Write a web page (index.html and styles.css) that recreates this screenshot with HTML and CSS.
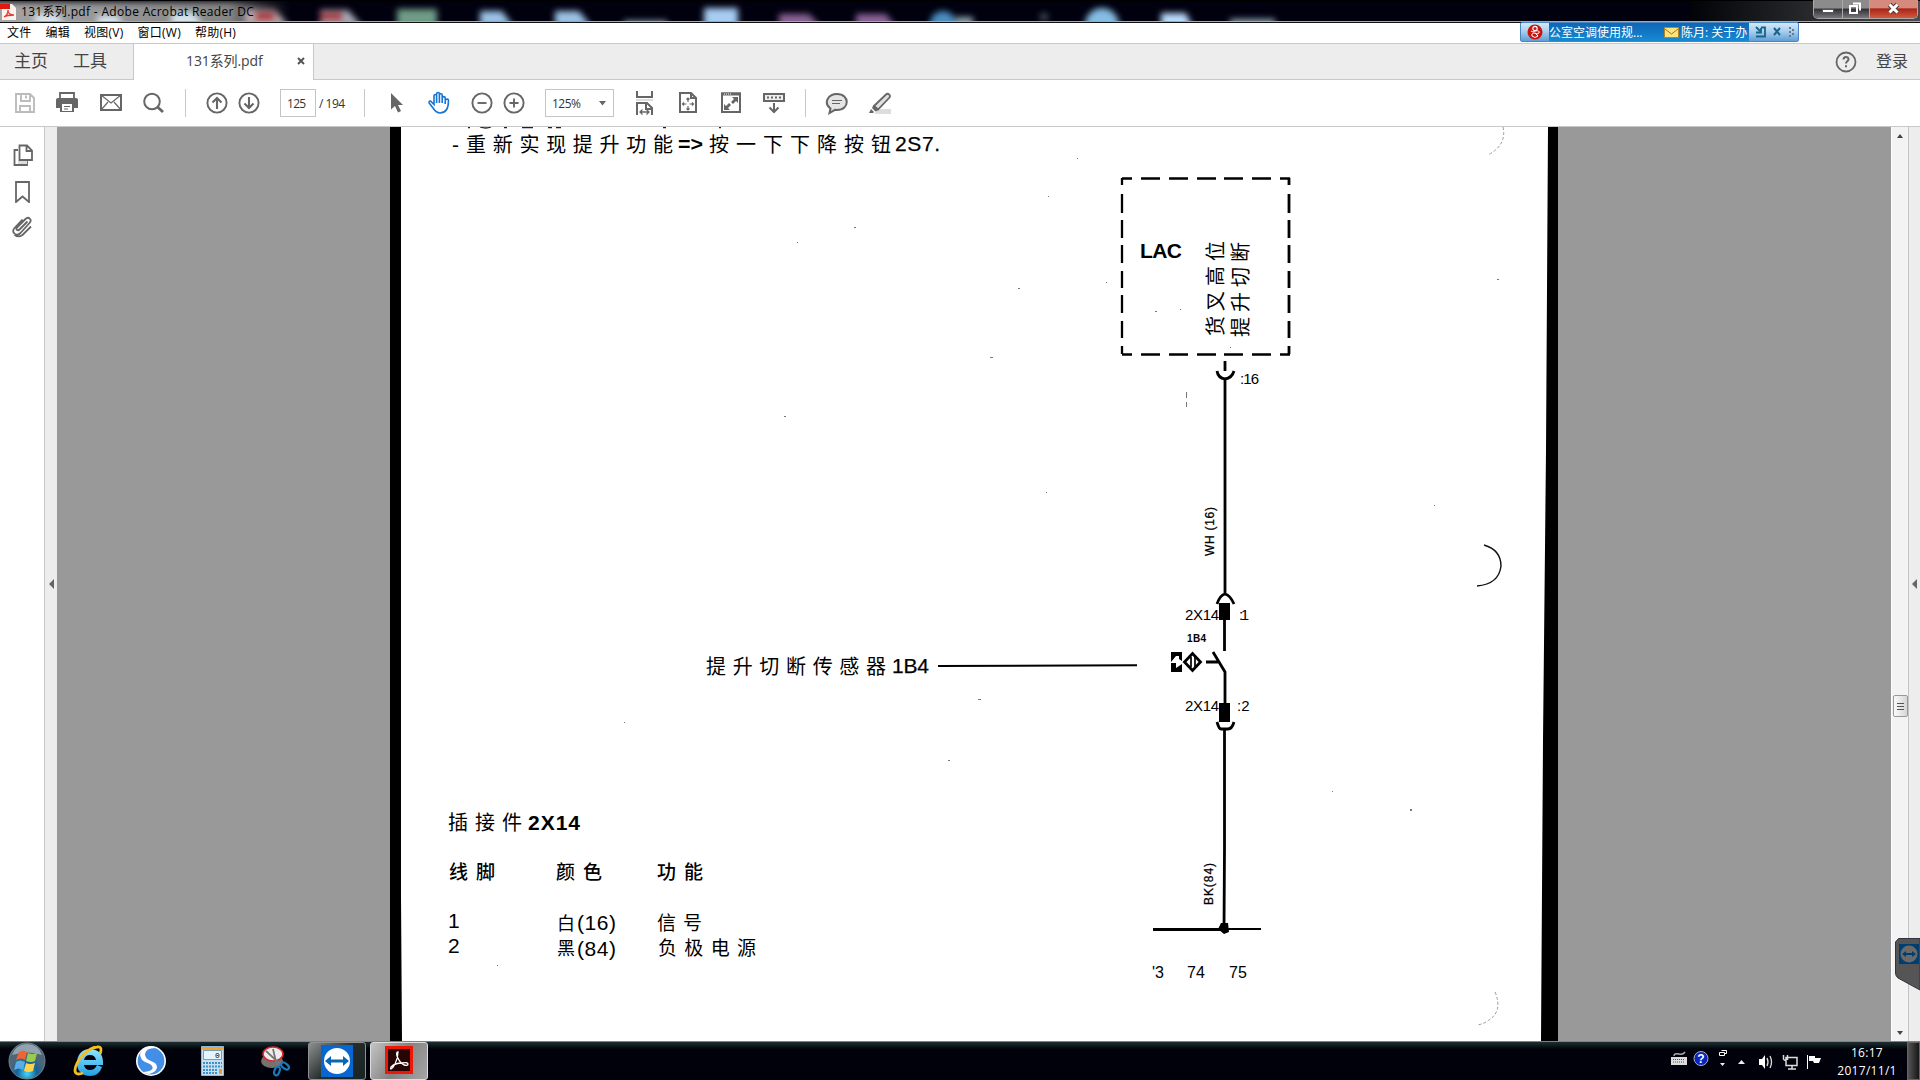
FILE: index.html
```html
<!DOCTYPE html>
<html lang="zh-CN">
<head>
<meta charset="utf-8">
<title>131系列.pdf - Adobe Acrobat Reader DC</title>
<link rel="stylesheet" href="styles.css">
</head>
<body>
<div class="screen">
<header class="titlebar">
  <svg class="aero" viewBox="0 0 1920 23" width="1920" height="23">
    <defs>
      <filter id="soft" x="-50%" y="-80%" width="200%" height="260%"><feGaussianBlur stdDeviation="3"/></filter>
      <linearGradient id="glow"><stop offset="0" stop-color="#a5a5a5"/><stop offset=".8" stop-color="#858585"/><stop offset="1" stop-color="#5a5a5e" stop-opacity="0"/></linearGradient>
      <linearGradient id="sheen"><stop offset="0" stop-color="#010308"/><stop offset="1" stop-color="#4c4c4c"/></linearGradient>
    </defs>
    <rect width="1920" height="23" fill="#00000f"/>
    <rect x="1690" width="230" height="23" fill="url(#sheen)"/>
    <g filter="url(#soft)">
      <rect x="-10" y="2" width="300" height="28" fill="url(#glow)"/>
      <path d="M35 14h22l8 14H35zM98 16h20l5 12H98zM172 13h22l8 13h-30z" fill="#d7e5ec"/>
      <path d="M245 10h30l14 16h-44z" fill="#b9aab1"/><rect x="255" y="12" width="20" height="9" fill="#ad282f"/>
      <path d="M320 10h28l14 16h-42z" fill="#a7aab8"/><rect x="320" y="12" width="23" height="9" fill="#a92936"/>
      <rect x="397" y="9" width="40" height="18" fill="#6f9b86"/>
      <path d="M480 11h22l11 15h-33zM555 11h24l12 15h-36z" fill="#9bc2e6"/>
      <rect x="624" y="21" width="43" height="5" fill="#a6b9cf"/>
      <rect x="704" y="8" width="34" height="22" fill="#a6ccf2"/>
      <path d="M779 14h30l12 13h-42zM856 14h30l10 13h-40z" fill="#8b6396"/>
      <circle cx="943" cy="24" r="13" fill="#4a8fc0"/><rect x="956" y="17" width="17" height="10" fill="#8ea5b0"/>
      <circle cx="1044" cy="17" r="4" fill="#46535b"/>
      <circle cx="1102" cy="25" r="17" fill="#85bde3"/>
      <path d="M1161 13h25l7 15h-32z" fill="#badbfb"/><rect x="1230" y="19" width="45" height="9" fill="#8ea0af"/>
    </g>
    <path d="M0 21.5h1920" stroke="#a8a8a8"/><path d="M0 22.5h1920" stroke="#111"/><path d="M0 .5h1920" stroke="#000"/>
  </svg>
  <svg class="pdf-mark" viewBox="0 0 16 18" width="16" height="18"><path d="M2 1h10l4 4v12H2z" fill="#f6f3f1"/><path d="M0 1h10v5H0z" fill="#e11a10"/><path d="M4 14c2-1 4-4 4-7 0 4 3 5 6 5-4 0-7 0-10 2z" fill="none" stroke="#e23b30" stroke-width="1.3"/></svg>
  <span class="window-title">131系列.pdf - Adobe Acrobat Reader DC</span>
  <div class="window-buttons">
    <span class="wb wb-min"><svg width="28" height="18" viewBox="0 0 28 18"><path d="M8.500 9.500h11v3h-11z" fill="#fff" stroke="#555"/></svg></span>
    <span class="wb wb-max"><svg width="26" height="18" viewBox="0 0 26 18"><path d="M10 3.500h7v7M7 6h7v7H7z" fill="none" stroke="#fff" stroke-width="2"/></svg></span>
    <span class="wb wb-close"><svg width="47" height="18" viewBox="0 0 47 18"><path d="M19.500 4.500l8 8m0-8l-8 8" stroke="#5b3530" stroke-width="5"/><path d="M19.500 4.500l8 8m0-8l-8 8" stroke="#fff" stroke-width="3"/></svg></span>
  </div>
</header>

<nav class="menubar"><span>文件</span><span>编辑</span><span>视图(V)</span><span>窗口(W)</span><span>帮助(H)</span></nav>

<div class="tabbar">
  <span class="tab-home">主页</span><span class="tab-tools">工具</span>
  <div class="tab-doc"><span class="tab-name">131系列.pdf</span><svg width="8" height="8" viewBox="0 0 8 8"><path d="M1 1l6 6m0-6L1 7" stroke="#555" stroke-width="2"/></svg></div>
  <svg class="help" width="22" height="22" viewBox="0 0 22 22"><circle cx="11" cy="11" r="9.500" fill="none" stroke="#666" stroke-width="1.800"/><path d="M8.500 8.500c0-3.500 5-3.300 5-.3 0 2-2.500 2-2.500 4.300M11 14.200v2" fill="none" stroke="#666" stroke-width="2"/></svg>
  <span class="login">登录</span>
</div>

<div class="toolbar">
  <svg class="ic" viewBox="0 0 24 24"><path d="M3 3h14l4 4v14H3zM8 3v7h9V3M13 4.500v3M7 21v-6h10v6" fill="none" stroke="#bcbcbc" stroke-width="1.900"/></svg>
  <svg class="ic" viewBox="0 0 24 24"><path d="M5 7V2h14v5" fill="none" stroke="#666" stroke-width="1.800"/><path d="M3 7h18q2 0 2 2v8h-4v4H5v-4H1V9q0-2 2-2z" fill="#666"/><path d="M7 13h10v7H7z" fill="#fff"/><path d="M9 15.500h6M9 18h4" stroke="#666"/></svg>
  <svg class="ic" viewBox="0 0 24 24"><path d="M2 4h20v15H2z" fill="none" stroke="#666" stroke-width="2"/><path d="M2 4l10 8 10-8M2 19l7-8m13 8l-7-8" fill="none" stroke="#666" stroke-width="1.200"/></svg>
  <svg class="ic" viewBox="0 0 24 24"><circle cx="11" cy="10.500" r="7.800" fill="none" stroke="#666" stroke-width="2"/><path d="M16.500 16l5.500 5" stroke="#666" stroke-width="2.800"/></svg>
  <i class="sep"></i>
  <svg class="ic" viewBox="0 0 24 24"><circle cx="12" cy="12" r="9.600" fill="none" stroke="#666" stroke-width="1.900"/><path d="M12 18V7m-4.500 4.500L12 7l4.500 4.500" fill="none" stroke="#666" stroke-width="2.100"/></svg>
  <svg class="ic" viewBox="0 0 24 24"><circle cx="12" cy="12" r="9.600" fill="none" stroke="#666" stroke-width="1.900"/><path d="M12 6v11m-4.500-4.500L12 17l4.500-4.500" fill="none" stroke="#666" stroke-width="2.100"/></svg>
  <span class="box page-box">125</span>
  <span class="page-total">/ 194</span>
  <i class="sep"></i>
  <svg class="ic" viewBox="0 0 24 24"><path d="M7 2v16.500l4-3.500 3 6.500 3-1.500-3-6h5z" fill="#666"/></svg>
  <svg class="ic" viewBox="0 0 24 24"><path d="M6 17L2.200 12c-.8-1.500 1-2.600 2.200-1.300L7 13.500V5c0-2 2.600-2 2.600 0V3c0-2 2.800-2 2.800 0v1c0-1.800 2.800-1.800 2.800.2V7c0-1.900 3-1.900 3 0v2.500c.8-2 3.300-1.700 3.300 0 0 5-.8 12.500-8.500 12.500C9.500 22 8 20 6 17zM9.600 4.500V12M12.400 4v8M15.200 5v7M18.200 8v5" fill="none" stroke="#1674d2" stroke-width="1.600"/></svg>
  <svg class="ic" viewBox="0 0 24 24"><circle cx="12" cy="12" r="9.600" fill="none" stroke="#666" stroke-width="1.900"/><path d="M7.500 12h9" stroke="#666" stroke-width="1.900"/></svg>
  <svg class="ic" viewBox="0 0 24 24"><circle cx="12" cy="12" r="9.600" fill="none" stroke="#666" stroke-width="1.900"/><path d="M7.500 12h9M12 7.500v9" stroke="#666" stroke-width="1.900"/></svg>
  <span class="box zoom-box">125%<svg width="7" height="5" viewBox="0 0 7 5"><path d="M0 0h7L3.500 4.500z" fill="#666"/></svg></span>
  <svg class="ic" viewBox="0 0 24 24"><path d="M5 0v6h15V0M5 24V12h10l5 5v7M14 12v6h6" fill="none" stroke="#666" stroke-width="2"/><path d="M4 9h17" stroke="#ddd" stroke-width="2"/><path d="M8 21h9M10.500 18.500L8 21l2.500 2.500M14.500 18.500L17 21l-2.500 2.500" fill="none" stroke="#666" stroke-width="1.300"/></svg>
  <svg class="ic" viewBox="0 0 24 24"><path d="M4 2h11l5 5v14H4zM15 2v5h5" fill="none" stroke="#666" stroke-width="2"/><path d="M12 7v4m0 4v4M6.500 13h4m3 0h4M10.500 8.500L12 7l1.500 1.500M10.500 17.500L12 19l1.500-1.500M8 11.500L6.500 13 8 14.500M16 11.500l1.500 1.500-1.500 1.500" fill="none" stroke="#666" stroke-width="1.200"/></svg>
  <svg class="ic" viewBox="0 0 24 24"><path d="M3 2.500h18V21H3z" fill="none" stroke="#666" stroke-width="2"/><path d="M2 3h20" stroke="#666" stroke-width="3"/><path d="M5 3h7" stroke="#fff" stroke-dasharray="1 1"/><path d="M13 6h6v6l-2-2-3 3-2-2 3-3zM5 13v6h6l-2-2 3-3-2-2-3 3z" fill="#666"/></svg>
  <svg class="ic" viewBox="0 0 24 24"><path d="M2 3h20v7H2z" fill="#eee" stroke="#666" stroke-width="2"/><path d="M5 6.500h14" stroke="#666" stroke-width="2" stroke-dasharray="2 2"/><path d="M12 12v9m-4.500-4.500L12 21l4.500-4.500" fill="none" stroke="#666" stroke-width="2"/></svg>
  <i class="sep"></i>
  <svg class="ic" viewBox="0 0 24 24"><path d="M12 3c13 0 13 16 0 16l-2-.2L4.500 22l1-4.500C-2 12 3 3 12 3z" fill="#e5e5e5" stroke="#666" stroke-width="2"/><path d="M7 9.500h10M7 12.500h8" stroke="#666" stroke-width="1.200"/></svg>
  <svg class="ic" viewBox="0 0 24 24"><path d="M10 18h13v5H6z" fill="#ddd"/><path d="M6 15L18 3.500c2-2 5 .5 3.500 3L10 18.500z" fill="#e1e1e1" stroke="#666" stroke-width="1.800"/><path d="M5.500 14l5 5-3 1.500-3.500-3.500zM3 18l3 3-1 1H1z" fill="#666"/></svg>
</div>

<main class="workspace">
  <aside class="sidebar">
    <svg width="22" height="23" viewBox="0 0 22 23"><path d="M6 6H2.500v15H15v-4" fill="none" stroke="#666" stroke-width="1.800"/><path d="M6 17h9v3H6z" fill="#ddd"/><path d="M7.500 1.500H15l5 5V16H7.500zM14.500 1.500V7H20" fill="#fff" stroke="#666" stroke-width="1.800"/></svg>
    <svg width="22" height="23" viewBox="0 0 22 23"><path d="M4 2h13v20l-6.500-5.500L4 22z" fill="none" stroke="#666" stroke-width="1.800"/></svg>
    <svg width="22" height="23" viewBox="0 0 22 23"><path d="M16 6l-8 8c-2 2-4-.5-2.500-2L14 3.500c3-3 7 .5 4 4L9 17.500c-4 4-10-.8-6-5L11 4M19.500 11L11 19.500c-3 2-6 1.500-8-.5" transform="translate(-.5 -.5)" fill="none" stroke="#666" stroke-width="1.800"/></svg>
  </aside>
  <div class="rail"><i class="arrow-left"></i></div>
  <div class="viewer">
    <svg class="scan" viewBox="390 127 1168 914" width="1168" height="914">
      <rect x="390" y="127" width="1168" height="914" fill="#fff"/>
      <path d="M390 127h11v769l1 145h-12zM1548 127h10v914h-17l2-300 3-290z" fill="#000"/>
      <g fill="none" stroke="#222" stroke-width="1.300"><path d="M468 127.500h2M480 127q6 2 11 0M504 127.500h3M522 127.500h11M548 127.500h4M556 127.500h5M663 127.500h3M719 127.500h2"/></g>
      <g class="hand" font-size="20">
        <text x="466" y="152" textLength="207">重新实现提升功能</text>
        <text x="709" y="152" textLength="182">按一下下降按钮</text>
        <text x="706" y="674" textLength="180">提升切断传感器</text>
        <text x="448" y="830" textLength="74">插接件</text>
        <g font-weight="500"><text x="449" y="879" font-size="19" textLength="46">线脚</text><text x="556" y="879" font-size="19" textLength="46">颜色</text><text x="657" y="879" font-size="19" textLength="46">功能</text></g>
        <text x="557" y="930" font-size="18">白</text><text x="657" y="930" font-size="19" textLength="45">信号</text>
        <text x="557" y="955" font-size="18">黑</text><text x="658" y="955" font-size="19" textLength="98">负极电源</text>
        <text transform="translate(1223 336) rotate(-90)" textLength="95">货叉高位</text>
        <text transform="translate(1248 337) rotate(-90)" textLength="95">提升切断</text>
      </g>
      <g class="type" font-size="21">
        <text x="452" y="152">-</text>
        <text x="678" y="151" textLength="25" lengthAdjust="spacingAndGlyphs" font-weight="bold">=&gt;</text><text x="895" y="151" class="firm" textLength="45">2S7.</text>
        <text x="892" y="673" class="firm" textLength="37">1B4</text>
        <text x="528" y="830" font-weight="bold" textLength="52">2X14</text>
        <text x="448" y="928">1</text><text x="448" y="953">2</text>
        <text x="577" y="930" textLength="39">(16)</text><text x="577" y="956" textLength="39">(84)</text>
        <text x="1140" y="258" font-weight="bold" textLength="42">LAC</text>
        <g font-size="15">
          <text x="1240" y="384" textLength="19">:16</text>
          <text x="1185" y="620" textLength="34">2X14</text><text x="1239" y="620" textLength="10">:1</text>
          <text x="1185" y="711" textLength="34">2X14</text><text x="1237" y="711">:2</text>
          <text x="1187" y="642" font-size="10" font-weight="bold" textLength="19">1B4</text>
          <text x="1152" y="978" font-size="16">'3</text><text x="1187" y="978" font-size="16" textLength="18">74</text><text x="1229" y="978" font-size="16" textLength="18">75</text>
          <text class="firm" transform="translate(1214 556) rotate(-90)" font-size="12" textLength="49">WH (16)</text>
          <text class="firm" transform="translate(1213 905) rotate(-90)" font-size="12" textLength="42">BK(84)</text>
        </g>
      </g>
      <g fill="none" stroke="#000" stroke-width="2.800">
        <path d="M1122 178.500h10m9 0h19m9 0h19m9 0h19m8 0h19m9 0h19m9 0h10M1122 354.500h10m9 0h19m9 0h19m9 0h19m8 0h19m9 0h19m9 0h10" stroke-width="2.300"/>
        <path d="M1122 178v7m0 9v19m0 7v18m0 7v18m0 8v17m0 7v18m0 8v17m0 8v8" stroke-width="2.300"/>
        <path d="M1289 178v7m0 9v19m0 7v18m0 7v18m0 8v17m0 7v18m0 8v17m0 8v8"/>
        <path d="M1225 361v10M1217 371q1 7 8 8 7-1 9-8M1225 379v216M1217 604q3-9 8-10 5 1 9 10M1224.500 620v31M1213 652l12 20v31M1206 662h12M1217 722q2 7 4 7h7q4 0 6-7M1224.500 729v120l-.5 80"/>
        <path d="M938 666l199-.7" stroke-width="2"/><path d="M1153 929.500h72" stroke-width="2.800"/><path d="M1225 929h36" stroke-width="2"/>
        <path d="M1192.500 653.500l8 8.500-8 8.500-8-8.500z"/><path d="M1191 657v10M1195 657v10" stroke-width="1.700"/>
      </g>
      <path d="M1219 603h11v17h-11zM1219 703h11v19h-11zM1221 923h7l1 9-5 2-6-5zM1171 652h11v9l-3-2v-3h-3l-5 6zM1171 672h11v-8l-6 4v-5h-5z"/>
      <g fill="none" stroke="#333" stroke-width="1"><path d="M1484 545q17 5 17 21-2 18-24 20" stroke="#111" stroke-width="1.400"/><path d="M1503 127q4 18-15 28M1495 992q8 19-6 28-5 4-12 5" stroke="#999" stroke-dasharray="3 2"/></g>
      <path d="M1186 392h1v6h-1zM1186 402h1v5h-1zM990 357h3v1h-3zM978 699h3v1h-3zM948 760h2v1h-2zM1410 809h2v2h-2zM1497 279h2v1h-2zM1155 311h2v1h-2zM1018 288h2v1h-2zM1106 282h1v1h-1zM1180 309h1v1h-1zM1230 347h1v1h-1zM854 227h2v1h-2zM1048 196h1v1h-1zM784 416h2v1h-2zM497 965h1v1h-1zM624 722h1v1h-1zM1332 791h1v1h-1zM1077 158h1v1h-1zM797 242h1v1h-1zM1434 505h1v1h-1zM1046 492h1v1h-1z" fill="#777"/>
    </svg>
  </div>
  <div class="scrollbar"><i class="arrow-up"></i><span class="thumb"><i></i><i></i><i></i></span><i class="arrow-down"></i></div>
  <div class="right-rail"><i class="arrow-left"></i></div>
</main>

<footer class="taskbar">
  <div class="task-icon start"><svg width="38" height="38" viewBox="0 0 38 38"><defs><radialGradient id="orb" cy=".85"><stop offset="0" stop-color="#46d7f7"/><stop offset=".55" stop-color="#12659d"/><stop offset="1" stop-color="#4e6678"/></radialGradient></defs><circle cx="19" cy="19" r="18" fill="url(#orb)" stroke="#71838d"/><path d="M4 13Q8 2 19 2t15 11q-14-5-30 0z" fill="#b6c4cc" opacity=".65"/><path d="M11 10q4-3 8 0l-2 8q-4-3-9 0z" fill="#ef6335"/><path d="M20 11q4 2 9 0l-2 8q-4 2-9 0z" fill="#9bcb4e"/><path d="M8 20q4-3 9 0l-2 8q-4-3-9 0z" fill="#58afe8"/><path d="M18 21q4 2 9 0l-2 8q-4 2-9 0z" fill="#ffd24b"/></svg></div>
  <div class="task-icon ie"><svg width="32" height="32" viewBox="0 0 32 32"><defs><linearGradient id="ieb" y2="1" x2="0"><stop stop-color="#91e5ff"/><stop offset="1" stop-color="#209fe6"/></linearGradient></defs><path d="M24 20q-2 5-7 5-5 0-6-5h19v-3C30 9 25 4 17 4S4 10 4 18s5 13 13 13q9 0 12-9zM11 15q1-5 6-5t6 5z" fill="url(#ieb)"/><path d="M27 9q3-8-3-7C15 3 3 15 2 25q0 6 8 3" fill="none" stroke="#f5be22" stroke-width="2.800"/></svg></div>
  <div class="task-icon sogou"><svg width="30" height="30" viewBox="0 0 30 30"><circle cx="15" cy="15" r="15" fill="#fff"/><circle cx="15" cy="15" r="13.400" fill="#438fe8"/><path d="M22 2Q10 1 9 8q0 5 6 7 6 2 6 6 0 5-8 7-3 0-6-2 12-1 9-6-1-2-7-4Q4 13 4 8 6 2 15 0z" fill="#fff"/></svg></div>
  <div class="task-icon calc"><svg width="23" height="30" viewBox="0 0 23 30"><path d="M.5.500h22v29H.5z" fill="#c4e0f2" stroke="#8ebbd9"/><path d="M1 1h21v3H1z" fill="#f3a330"/><path d="M2.500 4.500h18v9h-18z" fill="#e6f4fc" stroke="#789db5"/><text x="14" y="12" font-family="Liberation Mono" font-size="8">0</text><path d="M2 17h19M2 20.500h19M2 24h15M2 27h15" stroke="#3f90c7" stroke-width="2" stroke-dasharray="2 1"/><path d="M18 23h3v5h-3z" fill="#f19a22"/></svg></div>
  <div class="task-icon snip"><svg width="30" height="31" viewBox="0 0 30 31"><ellipse cx="12" cy="15" rx="11" ry="7" fill="#77706f"/><ellipse cx="13" cy="8" rx="10" ry="7" fill="#eee" stroke="#d52b2c" stroke-width="1.600"/><path d="M6 5l15 14M13 3l4 17" stroke="#777" stroke-width="1.800"/><ellipse cx="17" cy="25" rx="2.500" ry="4.500" transform="rotate(20 17 25)" fill="none" stroke="#177cbb" stroke-width="2.200"/><ellipse cx="25" cy="20" rx="2.500" ry="4.500" transform="rotate(-50 25 20)" fill="none" stroke="#177cbb" stroke-width="2.200"/></svg></div>
  <div class="task-button tv"><svg width="32" height="32" viewBox="0 0 32 32"><path d="M0 0h32v32H0z" fill="#0866d1"/><circle cx="16" cy="16" r="13" fill="#fff"/><path d="M4 16l6-5v3.500h12V11l6 5-6 5v-3.500H10V21z" fill="#0866b5"/></svg></div>
  <div class="task-button active"><svg width="28" height="28" viewBox="0 0 28 28"><path d="M1.500 1.500h25v25h-25z" fill="#280505" stroke="#ef1605" stroke-width="3"/><path d="M13 6q-2 0-1 4 2 6 7 9 4 1 4-1t-6-1q-7 0-11 4-1 2 0 2 2-1 4-5 3-6 3-12z" fill="none" stroke="#fff" stroke-width="1.300"/></svg></div>
  <div class="tray">
    <svg width="250" height="38" viewBox="1665 1042 250 38">
      <path d="M1671 1057h16v8h-16z" fill="#ddd"/><path d="M1673 1059.500h12M1673 1062h12" stroke="#555" stroke-width="1.200" stroke-dasharray="1 1"/><path d="M1674 1056q0-3 5-2 4 1 6-2" fill="none" stroke="#aaa" stroke-width="1.500"/>
      <circle cx="1701" cy="1058.500" r="7" fill="#0c22bd" stroke="#a3adc3"/><text x="1697.200" y="1063" fill="#fff" font-size="12" font-weight="bold" font-family="Liberation Sans">?</text>
      <path d="M1719.500 1052.500h5v3h-5zM1721.500 1050.500h5v3h-2" fill="none" stroke="#fff"/><path d="M1720 1063h5l-2.500 3zM1738 1064h7l-3.500-4z" fill="#eee"/>
      <path d="M1759 1059h3l3-4v14l-3-4h-3z" fill="#fff"/><path d="M1767 1058q2 4 0 8M1770 1056q3 6 0 12" fill="none" stroke="#ddd" stroke-width="1.300"/>
      <path d="M1786 1057.500h11v8h-11zM1792 1066v3m-4 0h8M1783.500 1055v4q1 2 3 1M1787.500 1055v5" fill="none" stroke="#ddd" stroke-width="1.500"/>
      <path d="M1807.500 1055v14" stroke="#fff"/><path d="M1809 1056h6v2h6l-2 5h-5l-1-2h-4z" fill="#fff"/>
    </svg>
    <div class="clock"><span>16:17</span><span>2017/11/1</span></div>
    <i class="show-desktop"></i>
  </div>
</footer>

<div class="mail-bar">
  <svg width="16" height="16" viewBox="0 0 16 16"><circle cx="8" cy="8" r="7.500" fill="#c8160e"/><circle cx="8" cy="4.500" r="2.200" fill="none" stroke="#fff" stroke-width="1.200"/><path d="M4 7q2 2 4 0 5-1 4 2-2 2-4 0-4 0-3 3 3 3 6 0l-3-3" fill="none" stroke="#fff"/></svg>
  <div class="ticker"><span class="t1">公室空调使用规...</span><svg width="15" height="11" viewBox="0 0 15 11"><path d="M.5.500h14v10H.5z" fill="#ffe37c" stroke="#b18424"/><path d="M1 2l6.500 5L14 2" fill="none" stroke="#9b751f"/></svg><span class="t2">陈月: 关于办</span></div>
  <svg class="mail-tools" width="46" height="16" viewBox="0 0 46 16"><path d="M4 12.500h9v-9H9M4 3l4 4M4 8.500h5V4" fill="none" stroke="#176488" stroke-width="1.800"/><path d="M22 4l6 7m0-7l-6 7" stroke="#176488" stroke-width="2"/><path d="M38 3v11M41 5v8" stroke="#5a7c99" stroke-width="2" stroke-dasharray="2 2"/></svg>
</div>
<svg class="tv-tab" width="25" height="53" viewBox="0 0 25 53"><path d="M.5 4l3-3.500H25V52L3 40Q.5 38 .5 35z" fill="#555" stroke="#2f3540"/><path d="M4 6h20v20H4z" fill="#003e70"/><circle cx="14" cy="16" r="8.500" fill="#6a6a6a"/><path d="M7 16l4-3v2h6v-2l4 3-4 3v-2h-6v2z" fill="#003e70"/></svg>
</div>
</body>
</html>
```

FILE: styles.css
```css
* { box-sizing: border-box; }
body { margin: 0; font-family: "Open Sans", "Noto Sans CJK SC", sans-serif; color: #333; overflow: hidden; }
svg { display: block; flex: none; }
.screen { position: relative; width: 1920px; height: 1080px; display: flex; flex-direction: column; background: #fff; }

.titlebar { position: relative; height: 23px; flex: none; display: flex; align-items: flex-start; }
.aero { position: absolute; left: 0; top: 0; }
.pdf-mark { position: relative; margin-top: 3px; }
.window-title { position: relative; margin-left: 5px; font-size: 12px; line-height: 23px; color: #000; letter-spacing: .32px; white-space: nowrap; }
.window-buttons { position: relative; margin-left: auto; margin-right: 2px; display: flex; height: 19px; border: 1px solid #a8a8a8; border-top: 0; border-radius: 0 0 5px 5px; overflow: hidden; }
.wb { background: linear-gradient(#8b8b8b 0 45%, #303034 50%, #77777c); border-right: 1px solid #aaa; }
.wb-close { border: 0; background: linear-gradient(#d68a7d 0 42%, #a9261a 50%, #d4593f); }

.menubar { height: 20px; flex: none; display: flex; gap: 14px; padding-left: 7px; font-size: 12px; line-height: 20px; letter-spacing: .25px; color: #000; white-space: nowrap; }

.tabbar { height: 37px; flex: none; display: flex; align-items: center; background: #ededed; border-top: 1px solid #c8c8c8; border-bottom: 1px solid #c8c8c8; font-size: 17px; line-height: 34px; color: #444; }
.tab-home { margin-left: 14px; width: 59px; padding-bottom: 2px; }
.tab-tools { width: 60px; padding-bottom: 2px; }
.tab-doc { height: 36px; width: 181px; margin-bottom: -1px; background: #fff; border: solid #c8c8c8; border-width: 0 1px; display: flex; align-items: center; padding: 0 0 2px 52px; font-size: 14px; }
.tab-name { width: 111px; letter-spacing: -.1px; }
.help { margin-left: auto; margin-right: 19px; }
.login { width: 44px; padding-bottom: 2px; font-size: 16px; }

.toolbar { height: 47px; flex: none; padding-left: 13px; display: grid; align-items: center; border-bottom: 1px solid #c8c8c8; grid-template-columns: 42px 44px 42px 44px 20px 32px 43px 39px 45px 20px 43px 43px 32px 43px 87px 44px 43px 43px 43px 20px 43px 24px; font-size: 12px; }
.ic { width: 24px; height: 24px; }
.sep { width: 1px; height: 28px; background: #c8c8c8; }
.box { height: 28px; border: 1px solid #c4c4c4; display: flex; align-items: center; }
.page-box { width: 36px; padding-left: 6px; letter-spacing: -.7px; }
.page-total { letter-spacing: -.5px; white-space: nowrap; }
.zoom-box { width: 69px; padding: 0 7px 0 6px; justify-content: space-between; letter-spacing: -.5px; }

.workspace { height: 914px; flex: none; display: flex; background: #999; }
.sidebar { width: 45px; background: #fff; border-right: 1px solid #c8c8c8; display: flex; flex-direction: column; gap: 13px; padding: 17px 0 0 12px; }
.rail { width: 12px; background: #ededed; display: flex; align-items: center; justify-content: center; }
.arrow-left { border: 5px solid transparent; border-right-color: #666; border-left: 0; }
.viewer { flex: 1; padding-left: 333px; }
.scrollbar { width: 17px; background: #f3f3f3; border-left: 1px solid #fff; display: flex; flex-direction: column; align-items: center; }
.arrow-up { margin-top: 7px; border: 3px solid transparent; border-bottom: 4px solid #444; border-top: 0; }
.arrow-down { margin: auto 0 6px; border: 3px solid transparent; border-top: 4px solid #444; border-bottom: 0; }
.thumb { width: 15px; height: 22px; margin-top: 557px; border: 1px solid #999; border-radius: 2px; background: linear-gradient(90deg, #fafafa, #d6d6d6); display: flex; flex-direction: column; align-items: center; justify-content: center; gap: 2px; }
.thumb i { width: 7px; height: 1px; background: #555; }
.right-rail { width: 12px; background: #ededed; border-left: 1px solid #c4c4c4; display: flex; align-items: center; justify-content: center; }
.hand { font-family: "Noto Sans CJK SC", sans-serif; font-weight: 400; }
.type { font-family: "Liberation Sans", Arial, sans-serif; }
.firm { stroke: #000; stroke-width: .25px; }

.taskbar { height: 39px; flex: none; display: flex; align-items: center; background: linear-gradient(#1d3033, #00020a 7px, #00000c); border-top: 1px solid #718884; padding-left: 8px; }
.task-icon { display: flex; justify-content: center; }
.start { width: 38px; }
.ie { width: 32px; margin-left: 27px; }
.sogou { width: 30px; margin-left: 31px; }
.calc { width: 23px; margin-left: 35px; }
.snip { width: 30px; margin-left: 36px; }
.task-button { height: 38px; width: 58px; display: flex; justify-content: center; padding-top: 2px; border: 1px solid #90908f; border-radius: 3px; background: linear-gradient(135deg, #8c9290, #252d2d 50%, #182323); }
.tv { margin-left: 18px; }
.active { margin-left: 4px; padding-top: 3px; background: linear-gradient(120deg, #c4c4c4, #838383 50%, #a5a5a5); border-color: #ddd; }
.tray { margin-left: auto; display: flex; position: relative; }
.clock { position: absolute; left: 164px; top: 2px; width: 76px; color: #fff; font-size: 12px; line-height: 18px; letter-spacing: .3px; display: flex; flex-direction: column; align-items: center; }
.show-desktop { width: 13px; height: 38px; margin-left: -8px; border: 1px solid #646464; background: linear-gradient(90deg, #555, #161616); }

.mail-bar { position: absolute; left: 1520px; top: 22px; width: 279px; height: 20px; display: flex; align-items: center; padding-left: 6px; border: 1px solid #4c86c0; border-radius: 2px; background: linear-gradient(#d3e9fa, #a7cdec 48%, #5f9fd5); }
.ticker { width: 201px; height: 18px; margin-left: 6px; display: flex; align-items: center; overflow: hidden; background: linear-gradient(#0e65b6, #178ad2); color: #fff; font-size: 12px; white-space: nowrap; }
.t1 { width: 115px; }
.t2 { margin-left: 2px; }
.mail-tools { margin-left: 3px; }
.tv-tab { position: absolute; left: 1895px; top: 938px; }
```
